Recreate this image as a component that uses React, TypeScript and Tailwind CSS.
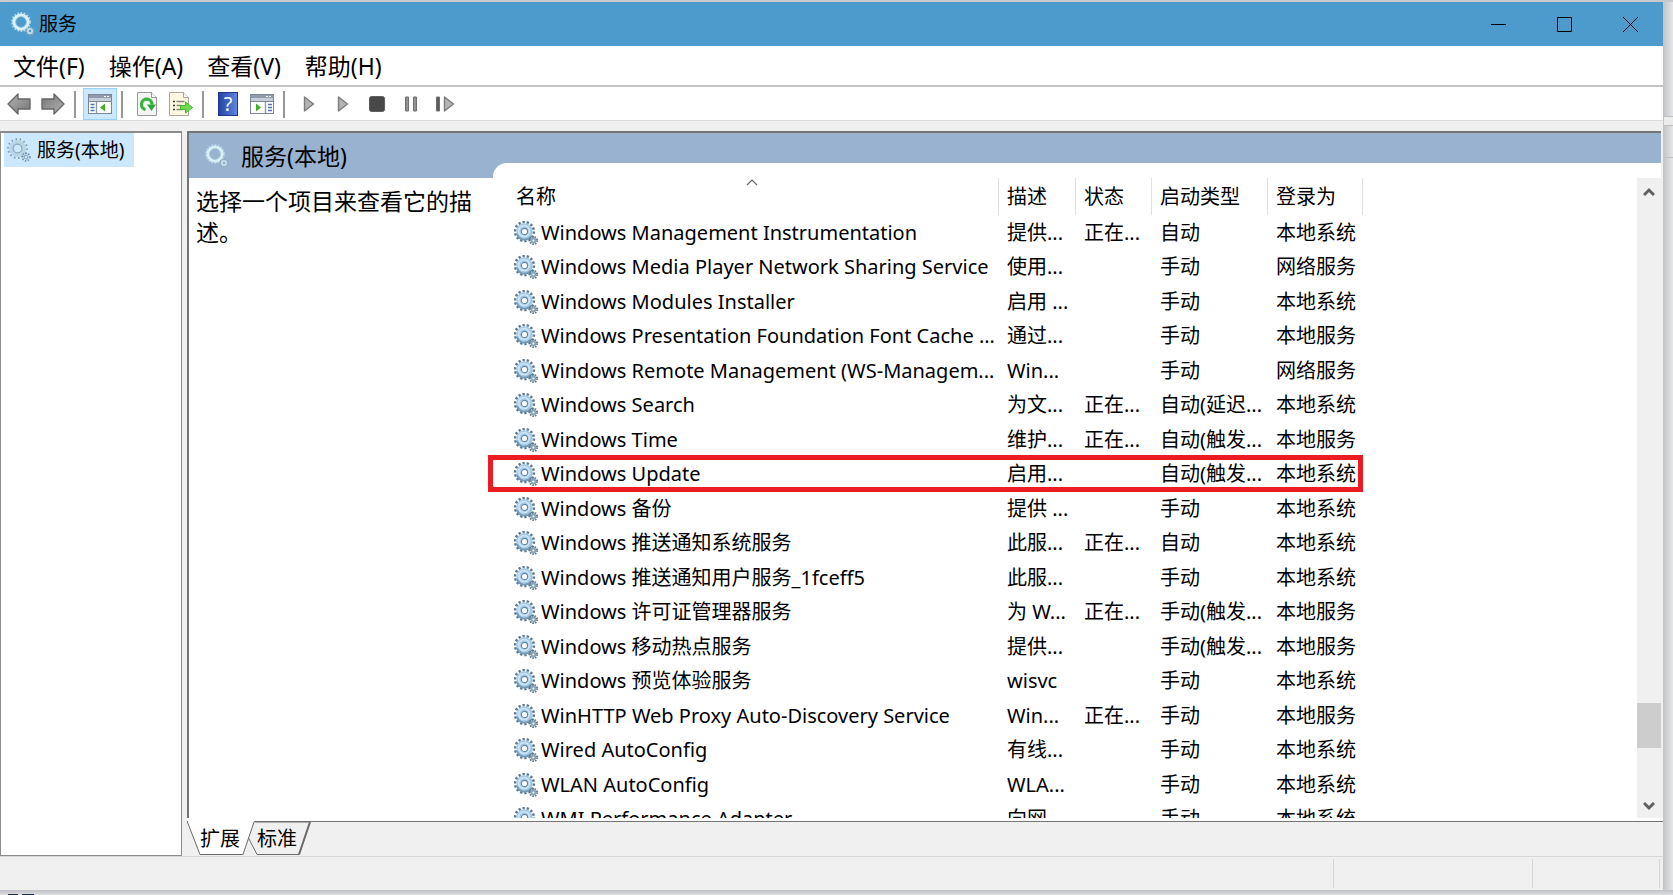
import { useState } from "react";
import type { ReactNode } from "react";

type Service = {
  name: string;
  description: string;
  status: string;
  startup: string;
  logon: string;
};

const MENUS = ["文件(F)", "操作(A)", "查看(V)", "帮助(H)"];

const SERVICES: Service[] = [
  { name: "Windows Management Instrumentation", description: "提供...", status: "正在...", startup: "自动", logon: "本地系统" },
  { name: "Windows Media Player Network Sharing Service", description: "使用...", status: "", startup: "手动", logon: "网络服务" },
  { name: "Windows Modules Installer", description: "启用 ...", status: "", startup: "手动", logon: "本地系统" },
  { name: "Windows Presentation Foundation Font Cache ...", description: "通过...", status: "", startup: "手动", logon: "本地服务" },
  { name: "Windows Remote Management (WS-Managem...", description: "Win...", status: "", startup: "手动", logon: "网络服务" },
  { name: "Windows Search", description: "为文...", status: "正在...", startup: "自动(延迟...", logon: "本地系统" },
  { name: "Windows Time", description: "维护...", status: "正在...", startup: "自动(触发...", logon: "本地服务" },
  { name: "Windows Update", description: "启用...", status: "", startup: "自动(触发...", logon: "本地系统" },
  { name: "Windows 备份", description: "提供 ...", status: "", startup: "手动", logon: "本地系统" },
  { name: "Windows 推送通知系统服务", description: "此服...", status: "正在...", startup: "自动", logon: "本地系统" },
  { name: "Windows 推送通知用户服务_1fceff5", description: "此服...", status: "", startup: "手动", logon: "本地系统" },
  { name: "Windows 许可证管理器服务", description: "为 W...", status: "正在...", startup: "手动(触发...", logon: "本地服务" },
  { name: "Windows 移动热点服务", description: "提供...", status: "", startup: "手动(触发...", logon: "本地服务" },
  { name: "Windows 预览体验服务", description: "wisvc", status: "", startup: "手动", logon: "本地系统" },
  { name: "WinHTTP Web Proxy Auto-Discovery Service", description: "Win...", status: "正在...", startup: "手动", logon: "本地服务" },
  { name: "Wired AutoConfig", description: "有线...", status: "", startup: "手动", logon: "本地系统" },
  { name: "WLAN AutoConfig", description: "WLA...", status: "", startup: "手动", logon: "本地系统" },
  { name: "WMI Performance Adapter", description: "向网...", status: "", startup: "手动", logon: "本地系统" },
];

const HIGHLIGHTED = "Windows Update";

function GearIcon() {
  return (
    <svg className="w-6 h-6 shrink-0" viewBox="0 0 24 24" fill="none" aria-hidden="true">
      <circle cx="10.5" cy="10.5" r="9.4" stroke="#5c7990" strokeWidth="2.6" strokeDasharray="2.3 1.9" />
      <circle cx="10.5" cy="10.5" r="5.8" stroke="#a3c9e6" strokeWidth="5" />
      <path d="M3 13a8 8 0 0 0 14 2.5" stroke="#7299b8" strokeWidth="1.8" />
      <circle cx="10" cy="10" r="5.4" stroke="#cde4f5" strokeWidth="1.8" />
      <circle cx="10.5" cy="10.5" r="3.1" fill="#fff" stroke="#6389a6" strokeWidth="1.1" />
      <circle cx="19.4" cy="19.4" r="3.7" stroke="#5f7a8d" strokeWidth="2" strokeDasharray="1.5 1.1" />
      <circle cx="19.4" cy="19.4" r="1.9" stroke="#8aa5b8" strokeWidth="1.8" />
    </svg>
  );
}

function PaleGearIcon() {
  return (
    <svg className="w-6 h-6 shrink-0" viewBox="0 0 24 24" fill="none" aria-hidden="true">
      <circle cx="10.5" cy="10.5" r="9.4" stroke="#809cae" strokeWidth="2" strokeDasharray="1.5 2.7" />
      <circle cx="10.5" cy="10.5" r="6.6" stroke="#bad6e6" strokeWidth="3.6" />
      <circle cx="10.5" cy="10.5" r="4.4" stroke="#84a9bf" strokeWidth="1.2" />
      <circle cx="19" cy="19" r="3.8" stroke="#7592a6" strokeWidth="1.8" strokeDasharray="1.4 1.4" />
      <circle cx="19" cy="19" r="1.8" stroke="#8fadc0" strokeWidth="1.2" />
    </svg>
  );
}

function RingGearIcon() {
  return (
    <svg className="w-6 h-6 shrink-0" viewBox="0 0 24 24" fill="none" aria-hidden="true">
      <circle cx="10" cy="10" r="9" stroke="#b5d5e4" strokeWidth="1.8" strokeDasharray="1.8 1.4" />
      <circle cx="10" cy="10" r="7" stroke="#d9f0f7" strokeWidth="3.2" />
      <circle cx="10" cy="10" r="5.4" stroke="#9cc4d8" strokeWidth="0.8" />
      <circle cx="19" cy="19" r="3.8" stroke="#8fabbd" strokeWidth="1.6" strokeDasharray="1.5 1.1" />
      <circle cx="19" cy="19" r="2.2" stroke="#c6dce7" strokeWidth="1.8" />
    </svg>
  );
}

function ArrowIcon({ forward = false }: { forward?: boolean }) {
  return (
    <svg className={forward ? "w-6 h-6 rotate-180" : "w-6 h-6"} viewBox="0 0 24 24">
      <defs>
        <linearGradient id="arrow" x1="0" y1="0" x2="1" y2="1">
          <stop offset="0" stopColor="#b5b5b5" />
          <stop offset="1" stopColor="#747474" />
        </linearGradient>
      </defs>
      <path d="M1 12 11 2v5h12v10H11v5z" fill="url(#arrow)" stroke="#666" strokeWidth="1.4" strokeLinejoin="round" />
    </svg>
  );
}

function PaneIcon({ right = false }: { right?: boolean }) {
  return (
    <svg className="w-6 h-5" viewBox="0 0 24 20">
      <rect x="0.5" y="0.5" width="23" height="19" fill="#fff" stroke="#7d8794" />
      <rect x="1" y="1" width="22" height="3" fill="#8f9aaa" />
      <path d="M16 2.5h2m1 0h2" stroke="#fff" />
      <rect x="1" y="4" width="22" height="3" fill="#c6cedb" />
      <path d="M0 7.5h24" stroke="#7d8794" />
      <path d={right ? "M15.5 8v11" : "M8.5 8v11"} stroke="#8f9aaa" strokeWidth="1.4" />
      <path d={right ? "M18 10.5h4m-4 3h4m-4 3h4" : "M2.5 10.5h4m-4 3h4m-4 3h4"} stroke="#4d78b4" strokeWidth="1.4" />
      <path d={right ? "M6 9.5v8l5-4z" : "M17 9.5v8l-5-4z"} fill="#3fae2a" />
    </svg>
  );
}

function RefreshIcon() {
  return (
    <svg className="w-5 h-6" viewBox="0 0 20 24">
      <path d="M.5.5h14l5 5v18H.5z" fill="#f4f4f4" stroke="#999" />
      <path d="M14.5.5v5h5" fill="#fff" stroke="#999" />
      <path d="M8.5 17.6A5.3 5.3 0 1 1 15 12.5" fill="none" stroke="#35b53b" strokeWidth="3.2" />
      <path d="M10 12.5h9L14.5 19z" fill="#2ca836" />
    </svg>
  );
}

function ExportIcon() {
  return (
    <svg className="w-6 h-6" viewBox="0 0 24 24">
      <path d="M.5.5h14l5 5v18H.5z" fill="#fdf8e2" stroke="#a9a594" />
      <path d="M14.5.5v5h5" fill="#fff" stroke="#a9a594" />
      <path d="M4 9.5h2m-2 4h2m-2 4h2" stroke="#333" strokeWidth="1.6" />
      <path d="M7.5 9.5h8m-8 4h5m-5 4h6" stroke="#8a8577" strokeWidth="1.4" />
      <path d="M11.5 13.5h5V10l7 5.5-7 5.5v-3.5h-5z" fill="#6fdc4b" stroke="#46b52c" />
    </svg>
  );
}

function PlayIcon() {
  return (
    <svg className="w-3 h-4" viewBox="0 0 12 16">
      <path d="M1.5 1v14L10.5 8z" fill="#b4b4b4" stroke="#7c7c7c" strokeWidth="1.4" strokeLinejoin="round" />
    </svg>
  );
}

function StopIcon() {
  return (
    <svg className="w-4 h-4" viewBox="0 0 16 16">
      <rect x="0.5" y="0.5" width="15" height="15" rx="2" fill="#484848" stroke="#5e5e5e" />
    </svg>
  );
}

function PauseIcon() {
  return (
    <svg className="w-4 h-4" viewBox="0 0 16 16">
      <path d="M2.5 1h3v14h-3zM10.5 1h3v14h-3z" fill="#929292" stroke="#6f6f6f" />
    </svg>
  );
}

function RestartIcon() {
  return (
    <svg className="w-5 h-4" viewBox="0 0 20 16">
      <path d="M1.5 1h3v14h-3z" fill="#5c5c5c" stroke="#6f6f6f" />
      <path d="M9.5 1v14L18.5 8z" fill="#b4b4b4" stroke="#7c7c7c" strokeWidth="1.4" strokeLinejoin="round" />
    </svg>
  );
}

function ToolButton({ label, active = false, children }: { label: string; active?: boolean; children: ReactNode }) {
  return (
    <button
      aria-label={label}
      className={
        active
          ? "w-[34px] h-8 flex items-center justify-center border border-[#99d1ff] bg-[#cce8ff]"
          : "w-[34px] h-8 flex items-center justify-center"
      }
    >
      {children}
    </button>
  );
}

function Separator() {
  return <div className="w-0.5 h-[27px] ml-1 mr-[7px] bg-[#979797]" />;
}

function TitleBar() {
  return (
    <header className="h-11 shrink-0 bg-[#4d9bcc] flex items-center pl-[11px]">
      <RingGearIcon />
      <h1 className="ml-1 text-[19px] leading-6">服务</h1>
      <div className="ml-auto flex h-full">
        <button aria-label="最小化" className="w-[66px] flex items-center justify-center">
          <svg className="w-4 h-4" viewBox="0 0 16 16"><path d="M1 8.5h15" stroke="#000" /></svg>
        </button>
        <button aria-label="最大化" className="w-[66px] flex items-center justify-center">
          <svg className="w-4 h-4" viewBox="0 0 16 16" fill="none"><path d="M1.5 1.5h14v14h-14z" stroke="#000" /></svg>
        </button>
        <button aria-label="关闭" className="w-[66px] flex items-center justify-center">
          <svg className="w-4 h-4" viewBox="0 0 16 16"><path d="M1 1l15 15m0-15l-15 15" stroke="#000" /></svg>
        </button>
      </div>
    </header>
  );
}

function Toolbar() {
  return (
    <div className="h-[33px] shrink-0 bg-white flex items-end pl-0.5">
      <div className="flex items-center">
        <ToolButton label="后退"><ArrowIcon /></ToolButton>
        <ToolButton label="前进"><ArrowIcon forward /></ToolButton>
        <Separator />
        <ToolButton label="显示/隐藏控制台树" active><PaneIcon /></ToolButton>
        <Separator />
        <ToolButton label="刷新"><RefreshIcon /></ToolButton>
        <ToolButton label="导出列表"><ExportIcon /></ToolButton>
        <Separator />
        <ToolButton label="帮助">
          <span className="w-5 h-6 border border-[#25358c] bg-gradient-to-r from-[#2743a5] to-[#5f86e0] text-white text-xl leading-[22px]">?</span>
        </ToolButton>
        <ToolButton label="显示/隐藏操作窗格"><PaneIcon right /></ToolButton>
        <Separator />
        <ToolButton label="启动服务"><PlayIcon /></ToolButton>
        <ToolButton label="继续服务"><PlayIcon /></ToolButton>
        <ToolButton label="停止服务"><StopIcon /></ToolButton>
        <ToolButton label="暂停服务"><PauseIcon /></ToolButton>
        <ToolButton label="重新启动服务"><RestartIcon /></ToolButton>
      </div>
    </div>
  );
}

function HeaderCell({ className, children }: { className: string; children: ReactNode }) {
  return (
    <th className={`${className} h-[52px] p-0 pt-[15px] text-left font-normal`}>
      <div className="h-[37px] flex items-center pl-2 border-r border-[#e0e0e0]">{children}</div>
    </th>
  );
}

function ServiceTable() {
  return (
    <table className="w-[870px] table-fixed border-collapse text-xl leading-6 whitespace-nowrap">
      <thead>
        <tr>
          <th className="w-[506px] h-[52px] p-0 pt-[15px] text-left font-normal">
            <div className="relative h-[37px] flex items-center pl-[23px] border-r border-[#e0e0e0]">
              名称
              <svg className="absolute top-0 left-1/2 w-3 h-2" viewBox="0 0 12 8" fill="none">
                <path d="M1 7l5-5 5 5" stroke="#666" strokeWidth="1.2" />
              </svg>
            </div>
          </th>
          <HeaderCell className="w-[77px]">描述</HeaderCell>
          <HeaderCell className="w-[76px]">状态</HeaderCell>
          <HeaderCell className="w-[116px]">启动类型</HeaderCell>
          <HeaderCell className="w-[95px]">登录为</HeaderCell>
        </tr>
      </thead>
      <tbody>
        {SERVICES.map((service) => (
          <tr key={service.name} className="relative odd:h-[35px] even:h-[34px]">
            <td className="p-0 pl-[21px]">
              <div className="flex items-center gap-[3px]">
                <GearIcon />
                {service.name}
              </div>
              {service.name === HIGHLIGHTED && (
                <div className="absolute -left-[5px] right-0 -top-0.5 h-[37px] border-5 border-[#ec1c24]" />
              )}
            </td>
            <td className="p-0 pl-2">{service.description}</td>
            <td className="p-0 pl-2">{service.status}</td>
            <td className="p-0 pl-2">{service.startup}</td>
            <td className="p-0 pl-2">{service.logon}</td>
          </tr>
        ))}
      </tbody>
    </table>
  );
}

function ScrollBar() {
  return (
    <div className="w-6 mt-[15px] shrink-0 bg-[#f0f0f0] flex flex-col">
      <button aria-label="向上滚动" className="h-7 flex items-center justify-center">
        <svg className="w-3 h-3" viewBox="0 0 12 12" fill="none"><path d="M1 9l5-5 5 5" stroke="#606060" strokeWidth="3" /></svg>
      </button>
      <div className="flex-1 flex flex-col">
        <div className="grow-[497]" />
        <div className="h-[45px] bg-[#cdcdcd]" />
        <div className="grow-[46]" />
      </div>
      <button aria-label="向下滚动" className="h-6 flex items-center justify-center">
        <svg className="w-3 h-3" viewBox="0 0 12 12" fill="none"><path d="M1 3l5 5 5-5" stroke="#606060" strokeWidth="3" /></svg>
      </button>
    </div>
  );
}

function ViewTabs() {
  const [view, setView] = useState("扩展");

  return (
    <div className="relative h-[34px] shrink-0 flex items-center pl-[13px] text-xl leading-6">
      <svg className="absolute -top-[3px] left-0 w-[126px] h-[37px]" viewBox="0 0 126 37" fill="none">
        <path d="M68 3H123L112 35.5H70L61 18" fill="#f0f0f0" stroke="#6b6b6b" />
        <path d="M0 0 13 35.5H56L67 3V0z" fill="#fff" />
        <path d="M0 2 13 35.5H56L67 3" stroke="#6b6b6b" />
        <path d="M112 35.5 123 3" stroke="#6b6b6b" strokeWidth="2" />
      </svg>
      {["扩展", "标准"].map((tab) => (
        <button
          key={tab}
          aria-pressed={view === tab}
          onClick={() => setView(tab)}
          className="relative w-[57px] text-left"
        >
          {tab}
        </button>
      ))}
    </div>
  );
}

export default function App() {
  return (
    <div className="h-screen overflow-hidden flex flex-col bg-[#dcdddf] text-black font-['Noto_Sans','Noto_Sans_CJK_SC',sans-serif]">
      <div className="h-0.5 shrink-0 bg-[#c9c9c9]" />
      <div className="flex-1 min-h-0 flex">
        <div className="flex-1 min-w-0 flex flex-col bg-[#f0f0f0] border-r border-[#b4cbd6] shadow-lg">
          <TitleBar />

          {/* 菜单栏 */}
          <nav className="h-[41px] shrink-0 bg-white border-b-2 border-[#c3c3c3] flex items-center pl-[13px] gap-6 text-[23px] leading-7">
            {MENUS.map((menu) => (
              <button key={menu}>{menu}</button>
            ))}
          </nav>
          <Toolbar />

          <div className="flex-1 min-h-0 flex gap-[5px] pt-2.5 border-t border-[#dadada]">
            {/* 控制台树 */}
            <aside className="w-[182px] shrink-0 bg-white border border-t-2 border-[#8b8b8b] pl-[3px]">
              <button className="h-[34px] w-[130px] pl-[3px] flex items-center gap-1.5 bg-[#cce8ff] text-[19px] leading-6 whitespace-nowrap">
                <PaleGearIcon />
                服务(本地)
              </button>
            </aside>

            <main className="flex-1 min-w-0 flex flex-col">
              <div className="flex-1 min-h-0 flex bg-[#99b2d0] border-t-2 border-l-2 border-[#747474] mr-0.5">
                <section className="w-[304px] shrink-0 flex flex-col">
                  <h2 className="h-[45px] shrink-0 flex items-center pl-4 gap-3 text-[23px] leading-7">
                    <RingGearIcon />
                    服务(本地)
                  </h2>
                  <p className="flex-1 bg-white pt-2 pl-[7px] pr-4 text-[23px] leading-[31px]">
                    选择一个项目来查看它的描述。
                  </p>
                </section>

                <section className="flex-1 min-w-0 pt-[30px] flex">
                  <div className="flex-1 min-w-0 bg-white rounded-tl-[14px] flex justify-between overflow-y-clip">
                    <ServiceTable />
                    <ScrollBar />
                  </div>
                </section>
              </div>
              <div className="h-[3px] shrink-0 bg-white" />
              <div className="h-px shrink-0 bg-[#747474]" />
              <ViewTabs />
            </main>
          </div>

          {/* 状态栏 */}
          <footer className="h-[34px] shrink-0 border-t border-[#d7d7d7] flex justify-end py-0.5 pr-[3px]">
            <div className="w-[199px] border-l border-[#d7d7d7]" />
            <div className="w-32 border-x border-[#d7d7d7]" />
          </footer>
        </div>

        {/* 窗口右侧露出的桌面 */}
        <div className="w-[9px] shrink-0 bg-gradient-to-r from-[#c4c6c9] to-[#e6e7e8] flex flex-col">
          <div className="h-[114px]" />
          <div className="h-2.5 border-y border-[#c0c0c0] bg-[#ececec]" />
          <div className="h-8 border-b border-[#c0c0c0]" />
        </div>
      </div>
      <div className="h-[5px] shrink-0 bg-gradient-to-b from-[#bfc2c6] to-[#dcdddf] flex items-end gap-1 pl-2">
        <div className="w-2.5 h-px bg-[#1f2c56]" />
        <div className="w-3 h-px bg-[#1f2c56]" />
      </div>
    </div>
  );
}
